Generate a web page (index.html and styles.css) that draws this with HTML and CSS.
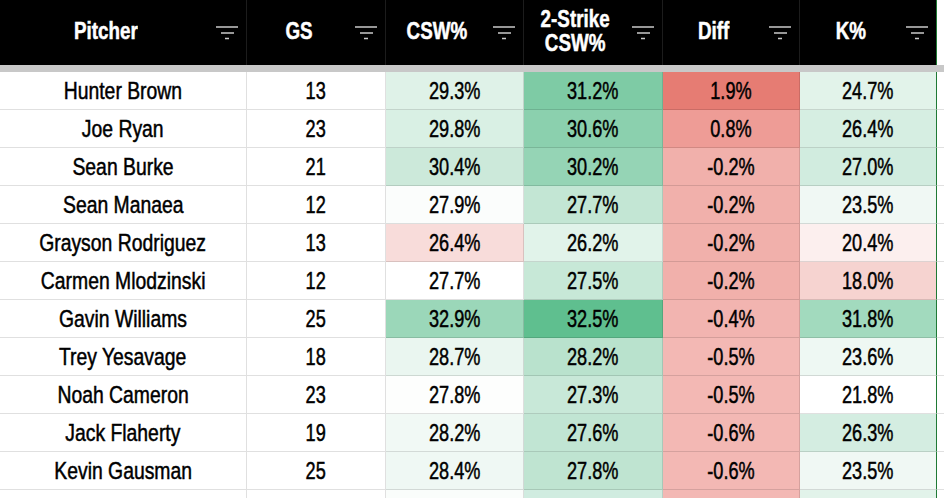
FILE: index.html
```html
<!DOCTYPE html>
<html lang="en">
<head>
<meta charset="utf-8">
<title>CSW% Table</title>
<link rel="stylesheet" href="styles.css">
</head>
<body>
<div class="viewport">
<div class="sheet">
  <div class="hd"><span class="hd-label"><span class="ht">Pitcher</span></span><svg class="filter" viewBox="0 0 22 14"><path d="M0 1h22M5 7h13M9 12.5h4"/></svg></div>
  <div class="hd"><span class="hd-label"><span class="ht">GS</span></span><svg class="filter" viewBox="0 0 22 14"><path d="M0 1h22M5 7h13M9 12.5h4"/></svg></div>
  <div class="hd"><span class="hd-label"><span class="ht">CSW%</span></span><svg class="filter" viewBox="0 0 22 14"><path d="M0 1h22M5 7h13M9 12.5h4"/></svg></div>
  <div class="hd"><span class="hd-label"><span class="ht">2-Strike<br>CSW%</span></span><svg class="filter" viewBox="0 0 22 14"><path d="M0 1h22M5 7h13M9 12.5h4"/></svg></div>
  <div class="hd"><span class="hd-label"><span class="ht">Diff</span></span><svg class="filter" viewBox="0 0 22 14"><path d="M0 1h22M5 7h13M9 12.5h4"/></svg></div>
  <div class="hd last"><span class="hd-label"><span class="ht">K%</span></span><svg class="filter" viewBox="0 0 22 14"><path d="M0 1h22M5 7h13M9 12.5h4"/></svg></div>
  <div class="hd-blank"></div>
  <div class="freeze"></div>

  <div class="c"><span class="name">Hunter Brown</span></div><div class="c"><span class="num">13</span></div>
  <div class="c" style="background:#dff2e8"><span class="num">29.3%</span></div>
  <div class="c" style="background:#7ecba5"><span class="num">31.2%</span></div>
  <div class="c" style="background:#e67c73"><span class="num">1.9%</span></div>
  <div class="c last" style="background:#e2f3ea"><span class="num">24.7%</span></div><div class="c x"></div>

  <div class="c"><span class="name">Joe Ryan</span></div><div class="c"><span class="num">23</span></div>
  <div class="c" style="background:#d9f0e4"><span class="num">29.8%</span></div>
  <div class="c" style="background:#8bd0ae"><span class="num">30.6%</span></div>
  <div class="c" style="background:#ee9c96"><span class="num">0.8%</span></div>
  <div class="c last" style="background:#d6eee2"><span class="num">26.4%</span></div><div class="c x"></div>

  <div class="c"><span class="name">Sean Burke</span></div><div class="c"><span class="num">21</span></div>
  <div class="c" style="background:#cce9da"><span class="num">30.4%</span></div>
  <div class="c" style="background:#95d4b5"><span class="num">30.2%</span></div>
  <div class="c" style="background:#f1b0ab"><span class="num">-0.2%</span></div>
  <div class="c last" style="background:#d1ecdf"><span class="num">27.0%</span></div><div class="c x"></div>

  <div class="c"><span class="name">Sean Manaea</span></div><div class="c"><span class="num">12</span></div>
  <div class="c" style="background:#fbfdfc"><span class="num">27.9%</span></div>
  <div class="c" style="background:#c3e6d4"><span class="num">27.7%</span></div>
  <div class="c" style="background:#f1b0ab"><span class="num">-0.2%</span></div>
  <div class="c last" style="background:#f0f8f4"><span class="num">23.5%</span></div><div class="c x"></div>

  <div class="c"><span class="name">Grayson Rodriguez</span></div><div class="c"><span class="num">13</span></div>
  <div class="c" style="background:#f8dcda"><span class="num">26.4%</span></div>
  <div class="c" style="background:#e1f3ea"><span class="num">26.2%</span></div>
  <div class="c" style="background:#f1b0ab"><span class="num">-0.2%</span></div>
  <div class="c last" style="background:#fcefee"><span class="num">20.4%</span></div><div class="c x"></div>

  <div class="c"><span class="name">Carmen Mlodzinski</span></div><div class="c"><span class="num">12</span></div>
  <div class="c"><span class="num">27.7%</span></div>
  <div class="c" style="background:#c7e8d7"><span class="num">27.5%</span></div>
  <div class="c" style="background:#f1b0ab"><span class="num">-0.2%</span></div>
  <div class="c last" style="background:#f6d3d0"><span class="num">18.0%</span></div><div class="c x"></div>

  <div class="c"><span class="name">Gavin Williams</span></div><div class="c"><span class="num">25</span></div>
  <div class="c" style="background:#9bd7b9"><span class="num">32.9%</span></div>
  <div class="c" style="background:#5fbf8f"><span class="num">32.5%</span></div>
  <div class="c" style="background:#f2b4b0"><span class="num">-0.4%</span></div>
  <div class="c last" style="background:#a2dabe"><span class="num">31.8%</span></div><div class="c x"></div>

  <div class="c"><span class="name">Trey Yesavage</span></div><div class="c"><span class="num">18</span></div>
  <div class="c" style="background:#eaf6f0"><span class="num">28.7%</span></div>
  <div class="c" style="background:#b9e2cd"><span class="num">28.2%</span></div>
  <div class="c" style="background:#f3b8b4"><span class="num">-0.5%</span></div>
  <div class="c last" style="background:#eef8f3"><span class="num">23.6%</span></div><div class="c x"></div>

  <div class="c"><span class="name">Noah Cameron</span></div><div class="c"><span class="num">23</span></div>
  <div class="c" style="background:#fdfefd"><span class="num">27.8%</span></div>
  <div class="c" style="background:#c8e8d8"><span class="num">27.3%</span></div>
  <div class="c" style="background:#f3b8b4"><span class="num">-0.5%</span></div>
  <div class="c last"><span class="num">21.8%</span></div><div class="c x"></div>

  <div class="c"><span class="name">Jack Flaherty</span></div><div class="c"><span class="num">19</span></div>
  <div class="c" style="background:#f1f9f5"><span class="num">28.2%</span></div>
  <div class="c" style="background:#c1e5d3"><span class="num">27.6%</span></div>
  <div class="c" style="background:#f3b8b4"><span class="num">-0.6%</span></div>
  <div class="c last" style="background:#d4ede1"><span class="num">26.3%</span></div><div class="c x"></div>

  <div class="c"><span class="name">Kevin Gausman</span></div><div class="c"><span class="num">25</span></div>
  <div class="c" style="background:#eff8f4"><span class="num">28.4%</span></div>
  <div class="c" style="background:#bfe4d1"><span class="num">27.8%</span></div>
  <div class="c" style="background:#f3b8b4"><span class="num">-0.6%</span></div>
  <div class="c last" style="background:#f0f8f4"><span class="num">23.5%</span></div><div class="c x"></div>

  <div class="c"></div><div class="c"></div>
  <div class="c" style="background:#fafdfb"></div>
  <div class="c" style="background:#d0ece0"></div>
  <div class="c" style="background:#f3b8b4"></div>
  <div class="c last" style="background:#e2f3ea"></div><div class="c x"></div>
</div>
</div>
</body>
</html>
```

FILE: styles.css
```css
html, body {
  margin: 0;
  padding: 0;
  background: #ffffff;
}

body {
  font-family: "Liberation Sans", Arial, sans-serif;
  color: #000000;
}

.viewport {
  width: 944px;
  height: 498px;
  overflow: hidden;
}

.sheet {
  display: grid;
  grid-template-columns: 247px 139px 138px 139px 137px 137px 7px;
  grid-template-rows: 65px 7px;
  grid-auto-rows: 38px;
  width: 944px;
}

.hd {
  background: #000000;
  border-right: 1px solid #1c1c1c;
  color: #ffffff;
  display: flex;
  align-items: center;
  padding-bottom: 3px;
  box-sizing: border-box;
}

.hd.last {
  border-right: 1px solid #1f7a35;
}

.hd-label {
  flex: 1;
  text-align: center;
  padding-right: 35px;
}

.ht {
  display: inline-block;
  font-weight: bold;
  font-size: 23.5px;
  line-height: 24px;
  transform: scaleX(0.8);
  white-space: nowrap;
  -webkit-text-stroke: 0.5px #ffffff;
}

.filter {
  width: 22px;
  height: 14px;
  margin-top: 4px;
  margin-right: 8px;
  margin-left: -30px;
  flex: none;
}

.filter path {
  stroke: #c9c9c9;
  stroke-width: 1.6;
  fill: none;
}

.hd-blank {
  background: #ffffff;
}

.freeze {
  grid-column: 1 / -1;
  background: #c8c8c8;
}

.c {
  box-sizing: border-box;
  border-right: 1px solid rgba(0, 0, 0, 0.12);
  border-bottom: 1px solid rgba(0, 0, 0, 0.12);
  display: flex;
  align-items: center;
  justify-content: center;
  white-space: nowrap;
}

.c.last {
  border-right: 1px solid #1f7a35;
}

.c.x {
  border-right: none;
}

.name,
.num {
  display: inline-block;
  font-size: 24.5px;
  line-height: 26px;
  -webkit-text-stroke: 0.5px #000000;
}

.name {
  transform: scaleX(0.79);
}

.num {
  transform: scaleX(0.74);
}
```
